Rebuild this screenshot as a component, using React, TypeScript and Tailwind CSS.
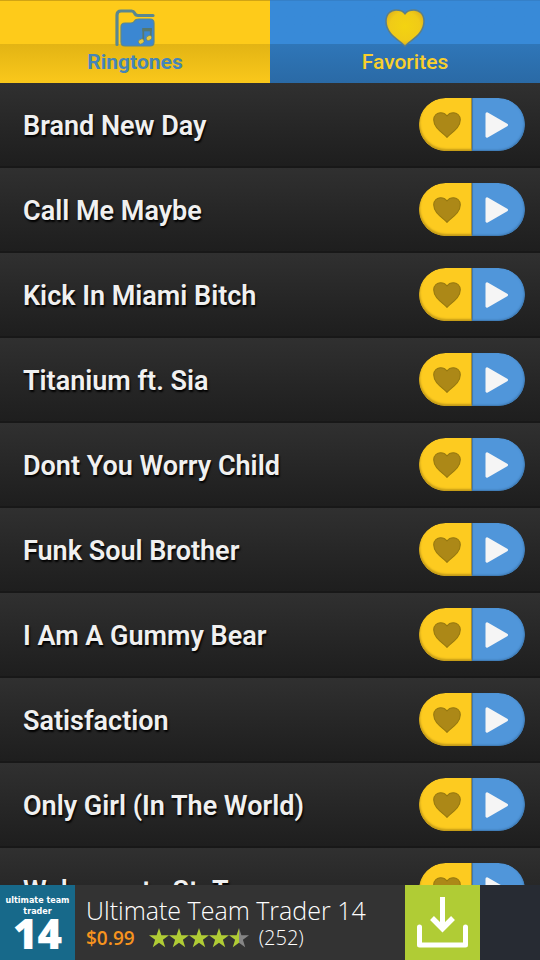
import { useId, useState } from "react";

const ringtones = [
  "Brand New Day",
  "Call Me Maybe",
  "Kick In Miami Bitch",
  "Titanium ft. Sia",
  "Dont You Worry Child",
  "Funk Soul Brother",
  "I Am A Gummy Bear",
  "Satisfaction",
  "Only Girl (In The World)",
  "Welcome to St. Tropez",
];

const HEART =
  "M20 39 C14 32 1 25 1 12 C1 5 6 1 11 1 C15 1 18 3 20 6 C22 3 25 1 29 1 C34 1 39 5 39 12 C39 25 26 32 20 39 Z";

const FolderIcon = () => (
  <svg viewBox="0 0 40 38" className="h-[38px] w-10" aria-hidden="true">
    <path
      d="M2 35.500V6Q2 2 6 2H16.500Q18.500 2 19.500 4Q20.500 6.500 23 6.500H38"
      fill="none"
      stroke="#5a8790"
      strokeWidth="3.200"
      strokeLinecap="round"
    />
    <path
      d="M6 18Q6 14 10 14H16Q18.500 14 19.500 12Q20.500 10 24 10H35Q39 10 39 14V33Q39 37 35 37H10Q6 37 6 33Z"
      fill="#3b87d2"
      stroke="#5a8790"
      strokeWidth="1.200"
    />
    <path d="M28.300 32V20H35.800V29" fill="none" stroke="#56786f" strokeWidth="1.800" />
    <path d="M27.400 20.800H36.700" stroke="#56786f" strokeWidth="3" />
    <ellipse cx="26.200" cy="32.500" rx="3" ry="2.300" fill="#e9c93c" stroke="#56786f" strokeWidth="0.600" transform="rotate(-35 26.200 32.500)" />
    <ellipse cx="34" cy="29" rx="3" ry="2.300" fill="#e9c93c" stroke="#56786f" strokeWidth="0.600" transform="rotate(-35 34 29)" />
  </svg>
);

const GoldHeart = () => (
  <svg viewBox="0 0 40 40" className="h-[38px] w-10" preserveAspectRatio="none" aria-hidden="true">
    <defs>
      <radialGradient id="gold" cx="0.5" cy="0.45" r="0.6">
        <stop offset="0" stopColor="#f3d311" />
        <stop offset="0.65" stopColor="#f0cb17" />
        <stop offset="1" stopColor="#d9ab20" />
      </radialGradient>
    </defs>
    <path
      d="M20 39 C15 33 1 27 1 13 C1 5 6 1 11 1 C15 1 18 2 20 5 C22 2 25 1 29 1 C34 1 39 5 39 13 C39 27 25 33 20 39 Z"
      fill="url(#gold)"
      stroke="#5d7f86"
      strokeWidth="1.500"
    />
  </svg>
);

const Star = ({ half = false }: { half?: boolean }) => {
  const id = useId();
  return (
    <svg viewBox="0 0 20 20" className="size-5" aria-hidden="true">
      <defs>
        <linearGradient id={id}>
          <stop offset="0.5" stopColor="#b0cc35" />
          <stop offset="0.5" stopColor={half ? "#858585" : "#b0cc35"} />
        </linearGradient>
      </defs>
      <path
        d="M10 0L12.400 7.200H20L13.900 11.800L16.200 19.300L10 14.800L3.800 19.300L6.100 11.800L0 7.200H7.600Z"
        fill={`url(#${id})`}
      />
    </svg>
  );
};

const RingtoneRow = ({ title }: { title: string }) => {
  const [liked, setLiked] = useState(false);

  return (
    <li className="flex h-[85px] shrink-0 items-center justify-between border-b-2 border-[#181818] bg-linear-to-b from-[#303030] to-[#1e1e1e] pr-[15px] pl-[23px]">
      <span className="pt-0.5 text-[27px] leading-8 font-semibold text-[#f0f0f0] [text-shadow:1px_2px_2px_#000]">
        {title}
      </span>
      <div className="flex h-[53px] w-[106px] shrink-0 overflow-hidden rounded-full">
        <button
          type="button"
          aria-label={`Add ${title} to favorites`}
          aria-pressed={liked}
          onClick={() => setLiked(!liked)}
          className="flex flex-1 items-center justify-center rounded-l-full border-r border-[#a58b30] bg-[#fdcb20] pl-1 shadow-[inset_1px_-2px_2px_#c49b18]"
        >
          <svg viewBox="0 0 40 40" className="h-[26px] w-7" preserveAspectRatio="none">
            <path d={HEART} fill={liked ? "#c0392b" : "#ac8817"} stroke="#96780f" strokeWidth="1.500" />
          </svg>
        </button>
        <button
          type="button"
          aria-label={`Play ${title}`}
          className="flex flex-1 items-center justify-center rounded-r-full border-l border-[#3f79b2] bg-[#5096da] pr-1 shadow-[inset_-1px_-1px_2px_#3c76ae]"
        >
          <svg viewBox="0 0 24 26" className="h-[26px] w-6">
            <path d="M2 1.800L21.500 13L2 24.200Z" fill="#f5f5f5" stroke="#f5f5f5" strokeWidth="3" strokeLinejoin="round" />
          </svg>
        </button>
      </div>
    </li>
  );
};

const AdBanner = () => (
  <aside className="flex h-[75px] shrink-0 bg-[#333333] font-['Open_Sans',sans-serif]">
    <div className="flex w-[75px] shrink-0 flex-col items-center bg-[#17698a] pt-2.5 text-center text-white">
      <span className="font-['DejaVu_Sans',sans-serif] text-[8px] leading-[11px] font-bold">
        ultimate team
        <br />
        trader
      </span>
      <span className="text-[42px] leading-8 font-extrabold">14</span>
    </div>
    <div className="flex min-w-0 flex-1 flex-col pt-2 pl-[11px]">
      <span className="text-[25px] leading-[34px] font-light whitespace-nowrap text-white">
        Ultimate Team Trader 14
      </span>
      <div className="flex items-center text-[19px] leading-[22px]">
        <span className="font-semibold text-[#f7931e]">$0.99</span>
        <span className="ml-3.5 flex" role="img" aria-label="Rated 4.5 out of 5">
          <Star />
          <Star />
          <Star />
          <Star />
          <Star half />
        </span>
        <span className="ml-2.5 text-[20px] font-light text-white">(252)</span>
      </div>
    </div>
    <button type="button" aria-label="Install" className="flex w-[75px] shrink-0 items-center justify-center bg-[#b0cc35]">
      <svg viewBox="0 0 75 75" className="size-[75px]" fill="none" stroke="#fff">
        <path d="M37.500 12V44" strokeWidth="5" />
        <path d="M27 33L37.500 43.500L48 33" strokeWidth="5.500" />
        <path d="M14.500 42V60H60.500V42" strokeWidth="5" strokeLinecap="round" strokeLinejoin="round" />
      </svg>
    </button>
    <div className="w-[60px] shrink-0 bg-[#272b33]" />
  </aside>
);

export default function App() {
  return (
    <div className="flex h-screen flex-col bg-[#1e1e1e] font-[Roboto,sans-serif]">
      <nav className="grid h-[83px] shrink-0 grid-cols-2 text-[21px] leading-[26px]">
        <button
          type="button"
          className="flex flex-col items-center gap-0.5 border-t border-[#d1a414] bg-linear-to-b from-[#fecb1a] from-53% via-[#e3b414] via-53% to-[#fac81b] pt-2 font-bold text-[#4585b8]"
        >
          <FolderIcon />
          Ringtones
        </button>
        <button
          type="button"
          className="flex flex-col items-center gap-0.5 border-t border-[#3580c8] bg-linear-to-b from-[#388ad8] from-53% via-[#2f76b8] via-53% to-[#2a6aa6] pt-2 font-medium text-[#f9cf2c]"
        >
          <GoldHeart />
          Favorites
        </button>
      </nav>

      <ul className="flex min-h-0 flex-1 flex-col overflow-hidden">
        {ringtones.map((title) => (
          <RingtoneRow key={title} title={title} />
        ))}
      </ul>

      <AdBanner />
    </div>
  );
}
